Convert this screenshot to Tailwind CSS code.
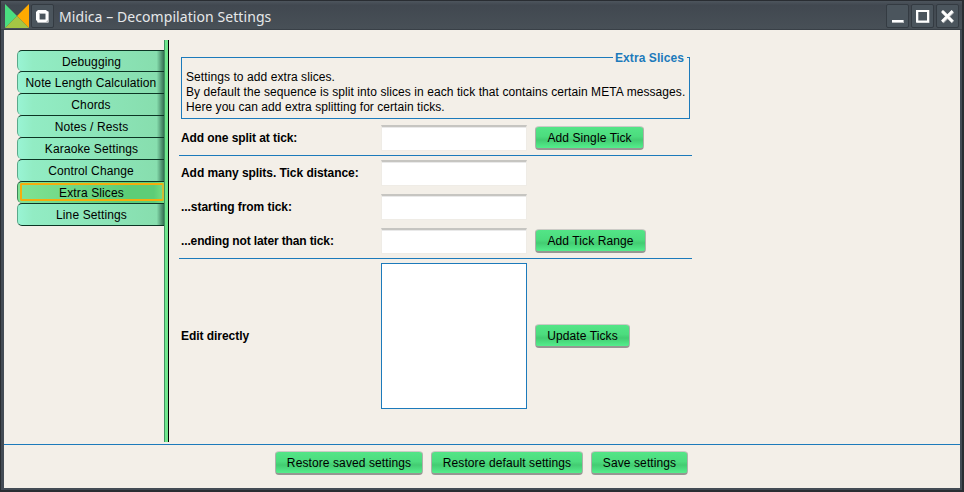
<!DOCTYPE html>
<html lang="en">
<head>
<meta charset="utf-8">
<title>Midica - Decompilation Settings</title>
<script src="https://cdn.jsdelivr.net/npm/@tailwindcss/browser@4"></script>
</head>
<body class="w-[964px] h-[492px] overflow-hidden bg-[#292d32] font-['Liberation_Sans',Arial,sans-serif] text-[12px] leading-[15px] text-black">
<div class="w-[964px] h-[492px] flex flex-col border-t border-l border-r-2 border-b-2 border-[#292d32] bg-[#434b54]">
  <header class="h-[29px] shrink-0 flex items-start pt-[3px] pl-1 bg-linear-to-b from-[#4d555d] via-[#414850] via-15% to-[#485057] border-b border-[#394047]">
    <svg class="w-6 h-6 shrink-0" viewBox="0 0 24 24"><path d="M0 0L12 12L0 24Z" fill="#4ade80"/><path d="M24 0L12 12L24 24Z" fill="#ffaa00"/><path d="M12 12L24 24H0Z" fill="#a5c644"/></svg>
    <div class="ml-[2px] w-[23px] h-6 rounded-[2px] border border-[#343b42] bg-[#4b555d] flex items-center justify-center">
      <svg class="w-[13px] h-[13px]" viewBox="0 0 13 13"><path fill-rule="evenodd" d="M2 1H12L13 2V12L12 13H2L1 12V2ZM4 4V10H10V4Z" fill="#b9bcbf"/><path fill-rule="evenodd" d="M2 0H10L12 2V10L10 12H2L0 10V2ZM3 3V9.500H9.500V3Z" fill="#fff"/></svg>
    </div>
    <h1 class="ml-[5px] mt-[2px] grow font-['Noto_Sans',sans-serif] text-[14px] leading-[21px] tracking-[0.07px] text-[#e6e8ea] whitespace-nowrap">Midica – Decompilation Settings</h1>
    <div class="flex gap-[2px] mr-[3px]">
      <div class="w-[23px] h-6 rounded-[2px] border border-[#343b42] bg-[#4b555d]"><svg class="w-[21px] h-[22px]" viewBox="0 0 21 22"><path d="M5 15h12v3H5z" fill="#b9bcbf"/><path d="M5 15h11v2H5z" fill="#fff"/></svg></div>
      <div class="w-[23px] h-6 rounded-[2px] border border-[#343b42] bg-[#4b555d]"><svg class="w-[21px] h-[22px]" viewBox="0 0 21 22"><path d="M5.5 6h11v11h-11z" fill="none" stroke="#b9bcbf" stroke-width="2"/><path d="M5 6h11v10.500H5z" fill="none" stroke="#fff" stroke-width="2"/></svg></div>
      <div class="w-[23px] h-6 rounded-[2px] border border-[#343b42] bg-[#4b555d]"><svg class="w-[21px] h-[22px]" viewBox="0 0 21 22"><path d="M5.500 6.500L16 17M16 6.500L5.500 17" stroke="#b9bcbf" stroke-width="3.200"/><path d="M5 6L15.500 16.500M15.500 6L5 16.500" stroke="#fff" stroke-width="2.500"/></svg></div>
    </div>
  </header>
  <main class="ml-[3px] mr-[2px] h-[458px] w-[956px] shrink-0 bg-[#f3efe8] flex flex-col">
    <div class="h-[414px] flex pt-[10px]">
      <nav class="ml-[13px] w-[147px] pt-[10px] text-center leading-[23px] tracking-[0.12px]">
        <div class="h-[21px] rounded-l-[5px] border-t border-l border-t-[#0c3524] border-l-[#5aa98a] bg-[linear-gradient(90deg,#99f4d4,#92ecc4_10%,#87deae_95%,#357052)] pl-px">Debugging</div>
        <div class="h-[22px] rounded-l-[5px] border-t border-l border-t-[#0c3524] border-l-[#5aa98a] bg-[linear-gradient(90deg,#99f4d4,#92ecc4_10%,#87deae_95%,#357052)] whitespace-nowrap">Note Length Calculation</div>
        <div class="h-[22px] rounded-l-[5px] border-t border-l border-t-[#0c3524] border-l-[#5aa98a] bg-[linear-gradient(90deg,#99f4d4,#92ecc4_10%,#87deae_95%,#357052)]">Chords</div>
        <div class="h-[22px] rounded-l-[5px] border-t border-l border-t-[#0c3524] border-l-[#5aa98a] bg-[linear-gradient(90deg,#99f4d4,#92ecc4_10%,#87deae_95%,#357052)] pl-px">Notes / Rests</div>
        <div class="h-[22px] rounded-l-[5px] border-t border-l border-t-[#0c3524] border-l-[#5aa98a] bg-[linear-gradient(90deg,#99f4d4,#92ecc4_10%,#87deae_95%,#357052)] pl-px">Karaoke Settings</div>
        <div class="h-[22px] rounded-l-[5px] border-t border-l border-t-[#0c3524] border-l-[#5aa98a] bg-[linear-gradient(90deg,#99f4d4,#92ecc4_10%,#87deae_95%,#357052)]">Control Change</div>
        <div class="h-[22px] rounded-l-[5px] border-t border-l border-t-[#0c3524] border-l-[#3a8557] bg-[linear-gradient(90deg,#81e394,#5dcd77_75%,#5dcd77_93%,#77df82)] pt-[1px] pl-[2px]">
          <div class="h-[18px] w-[144px] rounded-[2px] border-2 border-[#f5ad0c] border-r-[#d0bd35] pr-px"><span class="block leading-[17px]">Extra Slices</span></div>
        </div>
        <div class="h-[23px] rounded-l-[5px] border-y border-l border-y-[#0c3524] border-l-[#5aa98a] bg-[linear-gradient(90deg,#99f4d4,#92ecc4_10%,#87deae_95%,#357052)] pl-px">Line Settings</div>
      </nav>
      <div class="w-[5px] h-[402px] border-l border-r border-l-[#3f9161] border-r-black bg-[#6ee68c]"></div>
      <section class="ml-[10px] w-[513px]">
        <fieldset class="ml-[2px] mt-[10px] w-[509px] h-[69px] border border-[#1c7abb] pl-[4px] whitespace-nowrap">
          <legend class="ml-auto mr-[2px] pl-[2px] pr-[3px] h-[15px] leading-[17px] font-bold tracking-[0.08px] text-[#1c7abb]">Extra Slices</legend>
          <div class="pt-[5px] tracking-[0.078px]"><p>Settings to add extra slices.</p><p>By default the sequence is split into slices in each tick that contains certain META messages.</p><p class="tracking-[0.05px]">Here you can add extra splitting for certain ticks.</p></div>
        </fieldset>
        <div class="h-[37px] pt-[6px] pl-[2px] flex items-start border-b border-[#1c7abb]">
          <label class="w-[200px] font-bold leading-[26px] tracking-[-0.08px]">Add one split at tick:</label>
          <input class="w-[146px] h-[26px] bg-white border border-[#efece6] border-t-2 border-t-[#c6c5c1] shadow-[inset_0_1px_0_#e9e9e9]">
          <button class="ml-2 mt-px w-[109px] h-6 rounded-[4px] border border-t-[#cbcbc6] border-x-[#aeb0aa] border-b-2 border-b-[#969792] bg-[linear-gradient(#53e587,#4cdc7e_45%,#43cc72_62%,#54ee8c)] leading-[21px] pt-px tracking-[0.1px]">Add Single Tick</button>
        </div>
        <div class="h-[103px] pt-[4px] pl-[2px] flex flex-col gap-2 border-b border-[#1c7abb]">
          <div class="flex h-[26px]"><label class="w-[200px] font-bold leading-[26px] tracking-[-0.05px]">Add many splits. Tick distance:</label><input class="w-[146px] h-[26px] bg-white border border-[#efece6] border-t-2 border-t-[#c6c5c1] shadow-[inset_0_1px_0_#e9e9e9]"></div>
          <div class="flex h-[26px]"><label class="w-[200px] font-bold leading-[26px] tracking-[-0.05px]">...starting from tick:</label><input class="w-[146px] h-[26px] bg-white border border-[#efece6] border-t-2 border-t-[#c6c5c1] shadow-[inset_0_1px_0_#e9e9e9]"></div>
          <div class="flex h-[26px]"><label class="w-[200px] font-bold leading-[26px] tracking-[-0.13px]">...ending not later than tick:</label><input class="w-[146px] h-[26px] bg-white border border-[#efece6] border-t-2 border-t-[#c6c5c1] shadow-[inset_0_1px_0_#e9e9e9]">
          <button class="ml-2 mt-px w-[111px] h-6 rounded-[4px] border border-t-[#cbcbc6] border-x-[#aeb0aa] border-b-2 border-b-[#969792] bg-[linear-gradient(#53e587,#4cdc7e_45%,#43cc72_62%,#54ee8c)] leading-[21px] pt-px tracking-[0.1px]">Add Tick Range</button></div>
        </div>
        <div class="pt-[4px] pl-[2px] flex items-center">
          <label class="w-[200px] font-bold tracking-[-0.05px]">Edit directly</label>
          <textarea class="block w-[146px] h-[146px] bg-white border border-[#1c7abb] resize-none"></textarea>
          <button class="ml-2 w-[95px] h-6 rounded-[4px] border border-t-[#cbcbc6] border-x-[#aeb0aa] border-b-2 border-b-[#969792] bg-[linear-gradient(#53e587,#4cdc7e_45%,#43cc72_62%,#54ee8c)] leading-[21px] pt-px tracking-[0.1px]">Update Ticks</button>
        </div>
      </section>
    </div>
    <footer class="h-[44px] border-t border-[#1c7abb] pt-[6px] pl-[271px] flex gap-2">
      <button class="w-[148px] h-6 rounded-[4px] border border-t-[#cbcbc6] border-x-[#aeb0aa] border-b-2 border-b-[#969792] bg-[linear-gradient(#53e587,#4cdc7e_45%,#43cc72_62%,#54ee8c)] leading-[21px] pt-px tracking-[0.1px]">Restore saved settings</button>
      <button class="w-[152px] h-6 rounded-[4px] border border-t-[#cbcbc6] border-x-[#aeb0aa] border-b-2 border-b-[#969792] bg-[linear-gradient(#53e587,#4cdc7e_45%,#43cc72_62%,#54ee8c)] leading-[21px] pt-px tracking-[0.1px]">Restore default settings</button>
      <button class="w-[97px] h-6 rounded-[4px] border border-t-[#cbcbc6] border-x-[#aeb0aa] border-b-2 border-b-[#969792] bg-[linear-gradient(#53e587,#4cdc7e_45%,#43cc72_62%,#54ee8c)] leading-[21px] pt-px tracking-[0.1px]">Save settings</button>
    </footer>
  </main>
</div>
</body>
</html>
